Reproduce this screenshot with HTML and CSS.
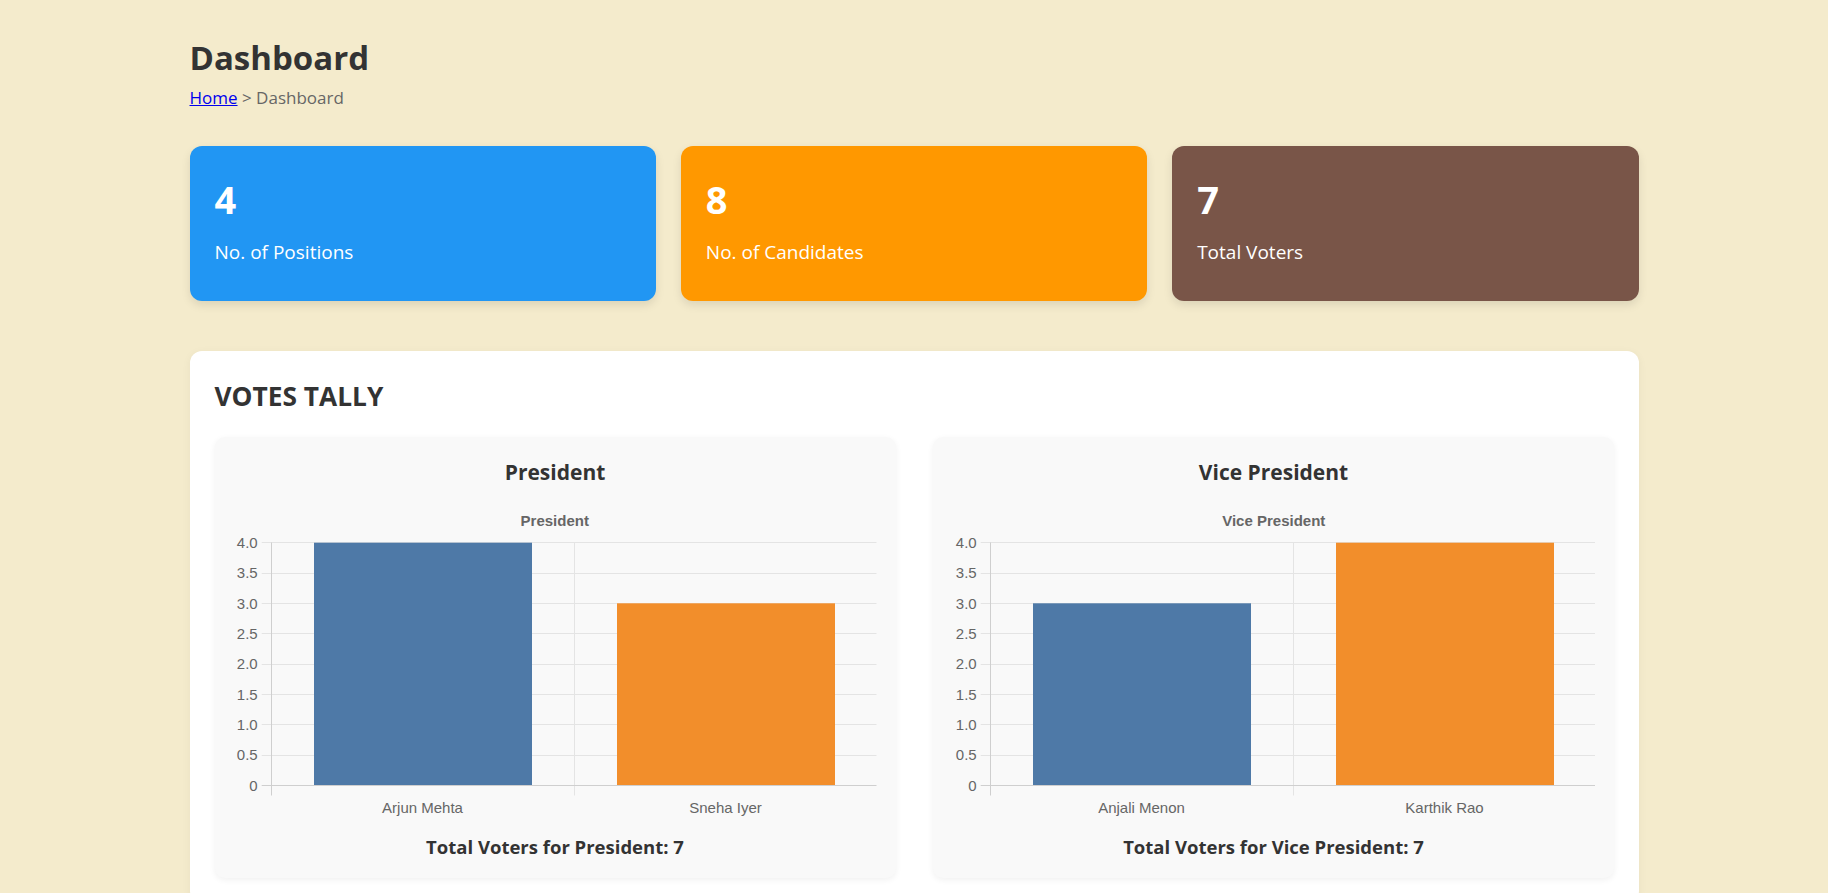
FILE: index.html
```html
<!DOCTYPE html>
<html lang="en">
<head>
<meta charset="utf-8">
<title>Dashboard</title>
<link rel="stylesheet" href="styles.css">
</head>
<body>
<div class="container">
  <h1 class="page-title">Dashboard</h1>
  <div class="breadcrumb"><a href="#">Home</a> &gt; Dashboard</div>

  <div class="stats">
    <div class="stat stat-blue">
      <div class="stat-num">4</div>
      <div class="stat-label">No. of Positions</div>
    </div>
    <div class="stat stat-orange">
      <div class="stat-num">8</div>
      <div class="stat-label">No. of Candidates</div>
    </div>
    <div class="stat stat-brown">
      <div class="stat-num">7</div>
      <div class="stat-label">Total Voters</div>
    </div>
  </div>

  <div class="panel">
    <h2 class="panel-title">VOTES TALLY</h2>
    <div class="charts">
      <div class="chart-card">
        <h3 class="chart-heading">President</h3>
        <svg class="chart" viewBox="0 0 643.5 322" width="643.5" height="322">
          <text class="c-title" x="321.75" y="27.2" text-anchor="middle">President</text>
          <g class="grid">
            <line x1="28.7" x2="643.5" y1="43.5" y2="43.5"/>
            <line x1="28.7" x2="643.5" y1="74.5" y2="74.5"/>
            <line x1="28.7" x2="643.5" y1="104.5" y2="104.5"/>
            <line x1="28.7" x2="643.5" y1="134.5" y2="134.5"/>
            <line x1="28.7" x2="643.5" y1="165.5" y2="165.5"/>
            <line x1="28.7" x2="643.5" y1="195.5" y2="195.5"/>
            <line x1="28.7" x2="643.5" y1="225.5" y2="225.5"/>
            <line x1="28.7" x2="643.5" y1="256.5" y2="256.5"/>
            <line x1="341.5" x2="341.5" y1="43.5" y2="296.5"/>
          </g>
          <rect class="bar-blue" x="81" y="43.7" width="218" height="242.6"/>
          <rect class="bar-orange" x="384" y="104.3" width="218" height="182"/>
          <g class="axis">
            <line x1="28.7" x2="643.5" y1="286.5" y2="286.5"/>
            <line x1="38.5" x2="38.5" y1="43.5" y2="296.5"/>
          </g>
          <g class="c-ticks" text-anchor="end">
            <text x="24.7" y="48.8">4.0</text>
            <text x="24.7" y="79.1">3.5</text>
            <text x="24.7" y="109.5">3.0</text>
            <text x="24.7" y="139.8">2.5</text>
            <text x="24.7" y="170.1">2.0</text>
            <text x="24.7" y="200.5">1.5</text>
            <text x="24.7" y="230.8">1.0</text>
            <text x="24.7" y="261.1">0.5</text>
            <text x="24.7" y="291.5">0</text>
          </g>
          <g class="c-ticks" text-anchor="middle">
            <text x="189.5" y="314.4">Arjun Mehta</text>
            <text x="492.5" y="314.4">Sneha Iyer</text>
          </g>
        </svg>
        <p class="chart-total">Total Voters for President: 7</p>
      </div>

      <div class="chart-card">
        <h3 class="chart-heading">Vice President</h3>
        <svg class="chart" viewBox="0 0 643.5 322" width="643.5" height="322">
          <text class="c-title" x="321.75" y="27.2" text-anchor="middle">Vice President</text>
          <g class="grid">
            <line x1="28.7" x2="643.5" y1="43.5" y2="43.5"/>
            <line x1="28.7" x2="643.5" y1="74.5" y2="74.5"/>
            <line x1="28.7" x2="643.5" y1="104.5" y2="104.5"/>
            <line x1="28.7" x2="643.5" y1="134.5" y2="134.5"/>
            <line x1="28.7" x2="643.5" y1="165.5" y2="165.5"/>
            <line x1="28.7" x2="643.5" y1="195.5" y2="195.5"/>
            <line x1="28.7" x2="643.5" y1="225.5" y2="225.5"/>
            <line x1="28.7" x2="643.5" y1="256.5" y2="256.5"/>
            <line x1="341.5" x2="341.5" y1="43.5" y2="296.5"/>
          </g>
          <rect class="bar-blue" x="81" y="104.3" width="218" height="182"/>
          <rect class="bar-orange" x="384" y="43.7" width="218" height="242.6"/>
          <g class="axis">
            <line x1="28.7" x2="643.5" y1="286.5" y2="286.5"/>
            <line x1="38.5" x2="38.5" y1="43.5" y2="296.5"/>
          </g>
          <g class="c-ticks" text-anchor="end">
            <text x="24.7" y="48.8">4.0</text>
            <text x="24.7" y="79.1">3.5</text>
            <text x="24.7" y="109.5">3.0</text>
            <text x="24.7" y="139.8">2.5</text>
            <text x="24.7" y="170.1">2.0</text>
            <text x="24.7" y="200.5">1.5</text>
            <text x="24.7" y="230.8">1.0</text>
            <text x="24.7" y="261.1">0.5</text>
            <text x="24.7" y="291.5">0</text>
          </g>
          <g class="c-ticks" text-anchor="middle">
            <text x="189.5" y="314.4">Anjali Menon</text>
            <text x="492.5" y="314.4">Karthik Rao</text>
          </g>
        </svg>
        <p class="chart-total">Total Voters for Vice President: 7</p>
      </div>
    </div>
  </div>
</div>
</body>
</html>
```

FILE: styles.css
```css
html, body {
  margin: 0;
  padding: 0;
}

body {
  background: #f4ebcc;
  font-family: "Open Sans", "Noto Sans", sans-serif;
  color: #333;
}

.container {
  width: 1449px;
  margin: 0 auto;
  padding: 38px 0 40px;
}

.page-title {
  margin: 0;
  font-size: 33px;
  line-height: 40px;
  font-weight: 700;
  color: #333;
}

.breadcrumb {
  margin-top: 8px;
  font-size: 17px;
  line-height: 24px;
  color: #666;
}

.breadcrumb a {
  color: #0000ee;
  text-decoration: underline;
}

.stats {
  margin-top: 36px;
  display: grid;
  grid-template-columns: repeat(3, 1fr);
  gap: 25px;
}

.stat {
  border-radius: 12px;
  padding: 29px 25px 36px;
  color: #fff;
  box-shadow: 0 4px 10px rgba(0, 0, 0, 0.1);
}

.stat-blue { background: #2196f3; }
.stat-orange { background: #ff9800; }
.stat-brown { background: #795548; }

.stat-num {
  font-size: 38px;
  line-height: 48px;
  font-weight: 700;
}

.stat-label {
  margin-top: 15.6px;
  font-size: 19px;
  line-height: 26px;
}

.panel {
  margin-top: 50px;
  background: #fff;
  border-radius: 12px;
  padding: 28px 25px 25px;
  box-shadow: 0 2px 10px rgba(0, 0, 0, 0.05);
}

.panel-title {
  margin: 0;
  font-size: 26.3px;
  line-height: 34px;
  font-weight: 700;
  color: #333;
}

.charts {
  margin-top: 24px;
  display: grid;
  grid-template-columns: 1fr 1fr;
  gap: 37.5px;
}

.chart-card {
  background: #f9f9f9;
  border-radius: 10px;
  padding: 18.75px 18.75px 18px;
  box-shadow: 0 2px 6px rgba(0, 0, 0, 0.06);
  text-align: center;
}

.chart-heading {
  margin: 2px 0 11.3px;
  font-size: 21px;
  line-height: 30px;
  font-weight: 700;
  color: #333;
}

.chart {
  display: block;
  width: 643.5px;
  height: 322px;
}

.chart .grid line {
  stroke: #e4e4e4;
  stroke-width: 1;
}

.chart .axis line {
  stroke: #cfcfcf;
  stroke-width: 1;
}

.bar-blue { fill: #4e79a7; }
.bar-orange { fill: #f28e2b; }

.c-title {
  font-family: "Liberation Sans", Arial, sans-serif;
  font-size: 15px;
  font-weight: 700;
  fill: #666;
}

.c-ticks {
  font-family: "Liberation Sans", Arial, sans-serif;
  font-size: 15px;
  fill: #666;
}

.chart-total {
  margin: 13.8px 0 0;
  font-size: 18.5px;
  line-height: 26px;
  font-weight: 700;
  color: #333;
}
```
